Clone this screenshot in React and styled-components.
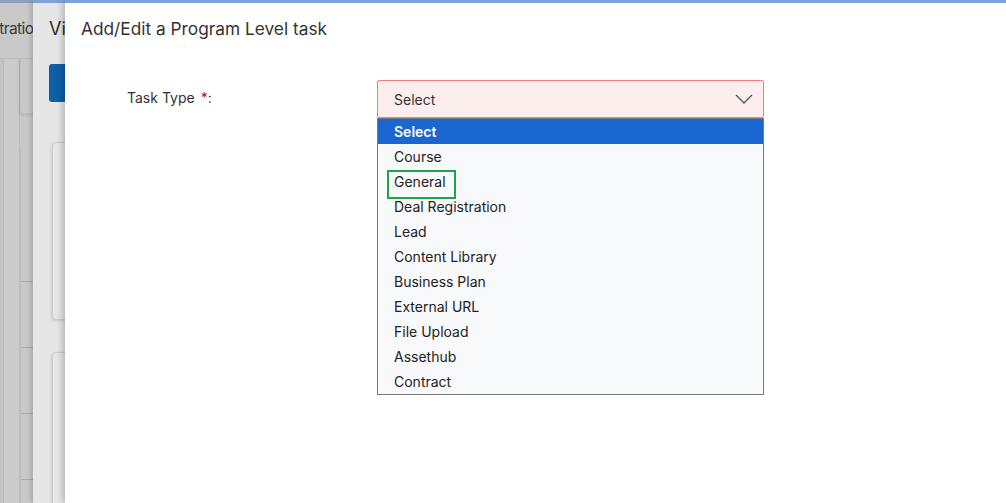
import React from "react";
import styled, { createGlobalStyle } from "styled-components";

const Global = createGlobalStyle`
  html, body { margin: 0; padding: 0; height: 100%; }
  body { font-family: Inter, "Noto Sans", Arial, sans-serif; overflow: hidden; }
  #root { height: 100%; }
`;

const Stage = styled.div`
  position: relative;
  width: 1006px;
  height: 503px;
  overflow: hidden;
  background: #c9c9c9;
`;

/* ---------- base page (dimmed) ---------- */
const BasePage = styled.div`
  display: flex;
  flex-direction: column;
  height: 100%;
  border-top: 3px solid #8fa0ba;
  background: #c9c9c9;
`;

const BaseHeader = styled.div`
  display: flex;
  justify-content: flex-end;
  align-items: center;
  width: 42px;
  height: 56px;
  padding-bottom: 5px;
  box-sizing: border-box;
  overflow: hidden;
  flex-shrink: 0;
  border-bottom: 1px solid #bdbdbd;
`;

const BaseTitle = styled.span`
  font-size: 15.5px;
  letter-spacing: -0.6px;
  color: #3a3a3a;
  white-space: nowrap;
`;

const BaseBody = styled.div`
  display: flex;
  flex: 1;
`;

const BaseStrip = styled.div`
  width: ${(p) => p.$w}px;
  background: ${(p) => p.$bg};
  border-right: 1px solid #bcbcbc;
  flex-shrink: 0;
`;

const BaseCardCol = styled.div`
  display: flex;
  flex-direction: column;
  gap: 33px;
  flex: 1;
`;

const BaseCard = styled.div`
  background: #c9c9c9;
  border-left: 1px solid #bdbdbd;
  border-bottom: 1px solid #bdbdbd;
  border-radius: 0 0 0 4px;
  box-shadow: -1px 1px 3px rgba(0, 0, 0, 0.12);
  height: 54px;
`;

const BaseTable = styled.div`
  display: flex;
  flex-direction: column;
  border-left: 1px solid #bdbdbd;
  border-radius: 4px 0 0 0;
`;

const BaseRow = styled.div`
  height: ${(p) => p.$h}px;
  border-bottom: 1px solid #9fafc2;
`;

/* ---------- second drawer ---------- */
const Drawer = styled.div`
  position: absolute;
  top: 0;
  left: 33px;
  bottom: 0;
  right: 0;
  background: #e6e6e6;
  border-top: 3px solid #7fa2d8;
  box-shadow: -2px 0 5px rgba(0, 0, 0, 0.18);
  display: flex;
  flex-direction: column;
  padding-left: 16px;
`;

const DrawerTitle = styled.div`
  height: 50px;
  display: flex;
  align-items: center;
  font-size: 18px;
  color: #2b2b2b;
  flex-shrink: 0;
`;

const DrawerButton = styled.div`
  width: 120px;
  height: 38px;
  margin-top: 11px;
  background: #0d5fa9;
  border-radius: 3px;
  flex-shrink: 0;
`;

const DrawerCards = styled.div`
  display: flex;
  flex-direction: column;
  gap: 32px;
  margin-top: 40px;
  margin-left: 3px;
`;

const DrawerCard = styled.div`
  height: ${(p) => p.$h}px;
  border: 1px solid #cdcdcd;
  border-radius: 4px;
  background: #e6e6e6;
  box-shadow: -1px 1px 3px rgba(0, 0, 0, 0.12);
  flex-shrink: 0;
`;

/* ---------- dialog ---------- */
const Dialog = styled.div`
  position: absolute;
  top: 0;
  left: 65px;
  right: 0;
  bottom: 0;
  background: #ffffff;
  border-top: 3px solid #7ba1dc;
  box-shadow: -3px 0 6px rgba(0, 0, 0, 0.2);
  display: flex;
  flex-direction: column;
`;

const DialogHeader = styled.div`
  height: 50px;
  display: flex;
  align-items: center;
  padding-left: 16px;
  font-size: 17.3px;
  color: #333333;
  flex-shrink: 0;
`;

const FormRow = styled.div`
  display: flex;
  align-items: flex-start;
  margin-top: 27px;
  padding-left: 62px;
`;

const Label = styled.div`
  width: 250px;
  height: 38px;
  padding-bottom: 4px;
  box-sizing: border-box;
  display: flex;
  align-items: center;
  font-size: 14px;
  color: #333333;
  flex-shrink: 0;
`;

const Required = styled.span`
  color: #9b1c1c;
  margin-left: 6px;
`;

const SelectWrap = styled.div`
  position: relative;
  width: 387px;
`;

const SelectBox = styled.div`
  box-sizing: border-box;
  height: 38px;
  border: 1px solid #ee7d7d;
  background: #fdeeee;
  border-radius: 2px;
  display: flex;
  align-items: center;
  justify-content: space-between;
  padding: 0 10px 0 16px;
  font-size: 14px;
  color: #333333;
`;

const ListBox = styled.div`
  position: absolute;
  top: 38px;
  left: 0;
  width: 387px;
  box-sizing: border-box;
  border: 1px solid #7a7a7a;
  background: #f8f9fb;
  display: flex;
  flex-direction: column;
`;

const Option = styled.div`
  height: 25px;
  display: flex;
  align-items: center;
  padding-left: 16px;
  font-size: 14px;
  color: ${(p) => (p.$active ? "#ffffff" : "#222222")};
  background: ${(p) => (p.$active ? "#1a67d2" : "transparent")};
  font-weight: ${(p) => (p.$active ? 600 : 400)};
`;

const Highlight = styled.div`
  position: absolute;
  left: 9px;
  top: 51px;
  width: 69px;
  height: 29px;
  box-sizing: border-box;
  border: 2.5px solid #20a24c;
  pointer-events: none;
`;

const options = [
  "Select",
  "Course",
  "General",
  "Deal Registration",
  "Lead",
  "Content Library",
  "Business Plan",
  "External URL",
  "File Upload",
  "Assethub",
  "Contract",
];

export default function App() {
  return (
    <>
      <Global />
      <Stage>
        <BasePage>
          <BaseHeader>
            <BaseTitle>Registration</BaseTitle>
          </BaseHeader>
          <BaseBody>
            <BaseStrip $w={3} $bg="#c4c4c4" />
            <BaseStrip $w={15} $bg="#cbcbcb" />
            <BaseCardCol>
              <BaseCard />
              <BaseTable>
                <BaseRow $h={134} />
                <BaseRow $h={65} />
                <BaseRow $h={65} />
                <BaseRow $h={65} />
                <BaseRow $h={65} />
              </BaseTable>
            </BaseCardCol>
          </BaseBody>
        </BasePage>

        <Drawer>
          <DrawerTitle>View Program</DrawerTitle>
          <DrawerButton />
          <DrawerCards>
            <DrawerCard $h={176} />
            <DrawerCard $h={200} />
          </DrawerCards>
        </Drawer>

        <Dialog>
          <DialogHeader>Add/Edit a Program Level task</DialogHeader>
          <FormRow>
            <Label>
              Task Type<Required>*</Required>:
            </Label>
            <SelectWrap>
              <SelectBox>
                <span>Select</span>
                <svg width="18" height="10" viewBox="0 0 18 10" fill="none">
                  <polyline
                    points="1,1 9,9 17,1"
                    stroke="#555"
                    strokeWidth="1.3"
                    fill="none"
                  />
                </svg>
              </SelectBox>
              <ListBox>
                {options.map((o, i) => (
                  <Option key={o} $active={i === 0}>
                    {o}
                  </Option>
                ))}
                <Highlight />
              </ListBox>
            </SelectWrap>
          </FormRow>
        </Dialog>
      </Stage>
    </>
  );
}
